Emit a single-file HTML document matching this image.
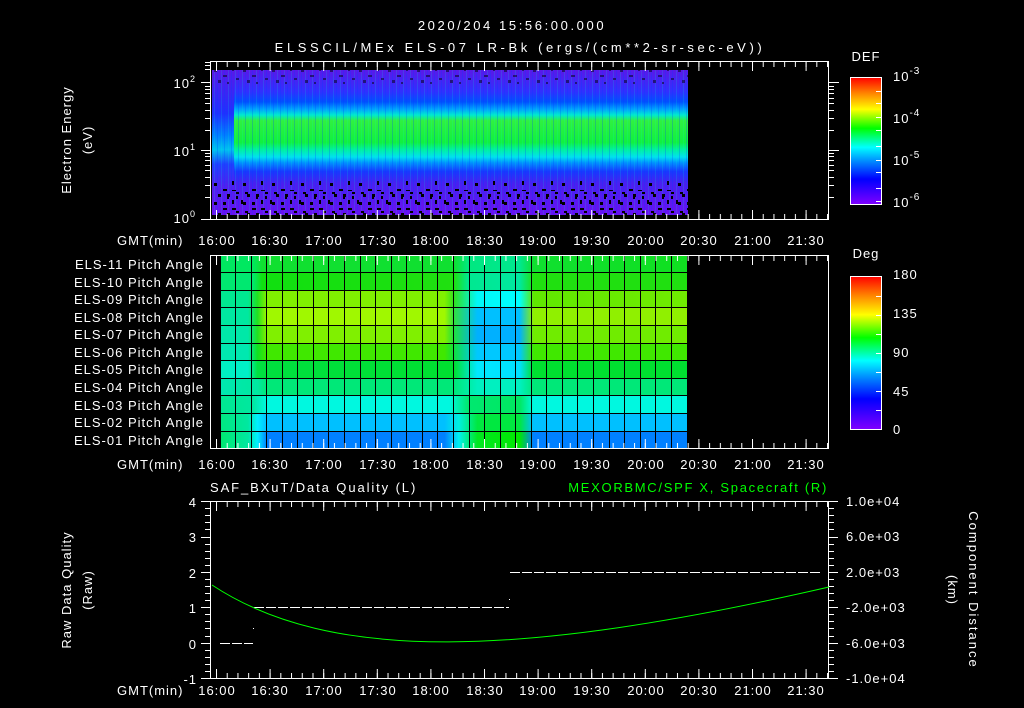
<!DOCTYPE html>
<html><head><meta charset="utf-8"><style>
html,body{margin:0;padding:0;background:#000;width:1024px;height:708px;overflow:hidden}
svg{display:block}
text{font-family:"Liberation Sans",sans-serif;fill:#fff;font-size:13px;letter-spacing:1px}
</style></head><body>
<svg width="1024" height="708" viewBox="0 0 1024 708" xmlns="http://www.w3.org/2000/svg">
<defs>
<linearGradient id="spec" x1="0" y1="0" x2="0" y2="1">
<stop offset="0" stop-color="#5a18e8"/><stop offset="0.15" stop-color="#3030ff"/><stop offset="0.22" stop-color="#0050ff"/>
<stop offset="0.27" stop-color="#00a0ff"/><stop offset="0.31" stop-color="#00e8d0"/><stop offset="0.35" stop-color="#30f040"/>
<stop offset="0.5" stop-color="#10f040"/><stop offset="0.55" stop-color="#00f0a0"/><stop offset="0.6" stop-color="#00e0f0"/>
<stop offset="0.64" stop-color="#0090ff"/><stop offset="0.7" stop-color="#1838ff"/><stop offset="0.78" stop-color="#4820f0"/>
<stop offset="1" stop-color="#6a10f0"/></linearGradient>
<linearGradient id="specL" x1="0" y1="0" x2="0" y2="1">
<stop offset="0" stop-color="#5a18e8"/><stop offset="0.3" stop-color="#2030ff"/><stop offset="0.45" stop-color="#0080ff"/>
<stop offset="0.55" stop-color="#00c0f0"/><stop offset="0.65" stop-color="#2040ff"/><stop offset="0.8" stop-color="#5020f0"/><stop offset="1" stop-color="#6a10f0"/></linearGradient>
<pattern id="speck" patternUnits="userSpaceOnUse" x="212" y="180" width="29" height="19">
<rect x="2" y="3" width="3" height="3" fill="#000"/><rect x="11" y="9" width="4" height="2" fill="#000"/>
<rect x="20" y="1" width="2" height="4" fill="#000"/><rect x="6" y="14" width="3" height="3" fill="#000"/>
<rect x="24" y="12" width="3" height="2" fill="#000"/><rect x="15" y="16" width="2" height="3" fill="#000"/></pattern>
<pattern id="streak" patternUnits="userSpaceOnUse" x="0" y="0" width="7" height="10">
<rect x="0" y="0" width="1" height="10" fill="#0040ff" opacity="0.25"/><rect x="4" y="0" width="1" height="10" fill="#00ffd0" opacity="0.15"/></pattern>
<pattern id="minT" patternUnits="userSpaceOnUse" x="216" y="0" width="10.72" height="708">
<rect x="0" y="0" width="1" height="708" fill="#fff"/></pattern>
<pattern id="majT" patternUnits="userSpaceOnUse" x="216" y="0" width="53.6" height="708">
<rect x="0" y="0" width="1" height="708" fill="#fff"/></pattern>
<linearGradient id="cb1" x1="0" y1="1" x2="0" y2="0">
<stop offset="0" stop-color="#8000ff"/><stop offset="0.2" stop-color="#0000ff"/><stop offset="0.33" stop-color="#0080ff"/>
<stop offset="0.45" stop-color="#00ffff"/><stop offset="0.6" stop-color="#00ff00"/><stop offset="0.75" stop-color="#ffff00"/>
<stop offset="0.88" stop-color="#ff8000"/><stop offset="1" stop-color="#ff0000"/></linearGradient>
</defs>

<text x="512" y="30" text-anchor="middle" font-size="16" style="letter-spacing:2.6px">2020/204 15:56:00.000</text>
<text x="520" y="52" text-anchor="middle" font-size="16" style="letter-spacing:3.6px">ELSSCIL/MEx ELS-07 LR-Bk  (ergs/(cm**2-sr-sec-eV))</text>

<!-- PANEL 1 -->
<rect x="212" y="70" width="476" height="145" fill="url(#spec)"/>
<rect x="212" y="70" width="22" height="145" fill="url(#specL)"/>
<rect x="212" y="70" width="476" height="145" fill="url(#streak)"/>
<rect x="212" y="70" width="476" height="14" fill="url(#speck)" opacity="0.5"/>
<rect x="212" y="180" width="476" height="35" fill="url(#speck)"/>
<rect x="212" y="190" width="476" height="25" fill="url(#speck)" transform="translate(9,0)"/>
<rect x="210.5" y="61.5" width="618" height="158" fill="none" stroke="#fff"/>
<rect x="211" y="62" width="617" height="5" fill="url(#minT)"/>
<rect x="211" y="62" width="617" height="9" fill="url(#majT)"/>
<rect x="211" y="214" width="617" height="5" fill="url(#minT)"/>
<rect x="211" y="210" width="617" height="9" fill="url(#majT)"/>
<g stroke="#fff">
<path d="M201 219.5h9M201 150.5h9M201 82.5h9"/>
<path d="M205 197.5h5M205 185.5h5M205 177.5h5M205 170.5h5M205 165.5h5M205 160.5h5M205 156.5h5M205 153.5h5M205 130.5h5M205 118.5h5M205 110.5h5M205 103.5h5M205 98.5h5M205 93.5h5M205 89.5h5M205 86.5h5M205 62.5h5M205 65.5h5M205 69.5h5"/>
<path d="M829 150.5h10M829 82.5h10M829 197.5h5M829 185.5h5M829 177.5h5M829 170.5h5M829 165.5h5M829 160.5h5M829 156.5h5M829 153.5h5M829 130.5h5M829 118.5h5M829 110.5h5M829 103.5h5M829 98.5h5M829 93.5h5M829 89.5h5M829 86.5h5"/>
</g>
<text x="196" y="88" text-anchor="end" font-size="14">10<tspan font-size="9" dy="-6">2</tspan></text>
<text x="196" y="156" text-anchor="end" font-size="14">10<tspan font-size="9" dy="-6">1</tspan></text>
<text x="196" y="223" text-anchor="end" font-size="14">10<tspan font-size="9" dy="-6">0</tspan></text>
<text transform="translate(71,140) rotate(-90)" text-anchor="middle" font-size="15">Electron Energy</text>
<text transform="translate(92,140) rotate(-90)" text-anchor="middle" font-size="15">(eV)</text>
<rect x="850.5" y="77.5" width="31" height="127" fill="url(#cb1)" stroke="#fff"/>
<g stroke="#fff"><path d="M876 91.5h6M876 103.5h6M876 117.5h6M876 130.5h6M876 146.5h6M876 160.5h6M876 172.5h6M876 188.5h6M876 201.5h6"/></g>
<text x="866" y="61" text-anchor="middle" font-size="16">DEF</text>
<text x="893" y="81" font-size="16">10<tspan font-size="10" dy="-7">-3</tspan></text>
<text x="893" y="123" font-size="16">10<tspan font-size="10" dy="-7">-4</tspan></text>
<text x="893" y="165" font-size="16">10<tspan font-size="10" dy="-7">-5</tspan></text>
<text x="893" y="207" font-size="16">10<tspan font-size="10" dy="-7">-6</tspan></text>

<g id="tl">
<text x="117" y="245">GMT(min)</text>
<g text-anchor="middle">
<text x="217" y="245">16:00</text><text x="270" y="245">16:30</text><text x="324" y="245">17:00</text>
<text x="378" y="245">17:30</text><text x="431" y="245">18:00</text><text x="485" y="245">18:30</text>
<text x="538" y="245">19:00</text><text x="592" y="245">19:30</text><text x="646" y="245">20:00</text>
<text x="699" y="245">20:30</text><text x="753" y="245">21:00</text><text x="806" y="245">21:30</text>
</g></g>
<use href="#tl" y="224"/>
<use href="#tl" y="450"/>

<!-- PANEL 2 -->
<linearGradient id="r1" x1="220" x2="688" gradientUnits="userSpaceOnUse"><stop offset="0" stop-color="#00e860"/><stop offset="0.07" stop-color="#00e860"/><stop offset="0.09" stop-color="#10e030"/><stop offset="0.5" stop-color="#10e030"/><stop offset="0.53" stop-color="#00e880"/><stop offset="0.64" stop-color="#00e890"/><stop offset="0.67" stop-color="#10e030"/><stop offset="1" stop-color="#10e020"/></linearGradient>
<linearGradient id="r2" x1="220" x2="688" gradientUnits="userSpaceOnUse"><stop offset="0" stop-color="#00e870"/><stop offset="0.07" stop-color="#00e870"/><stop offset="0.09" stop-color="#10e010"/><stop offset="0.5" stop-color="#20e010"/><stop offset="0.53" stop-color="#00e890"/><stop offset="0.64" stop-color="#00e8a0"/><stop offset="0.67" stop-color="#20e010"/><stop offset="1" stop-color="#20e010"/></linearGradient>
<linearGradient id="r3" x1="220" x2="688" gradientUnits="userSpaceOnUse"><stop offset="0" stop-color="#00e890"/><stop offset="0.06" stop-color="#00e890"/><stop offset="0.08" stop-color="#20e020"/><stop offset="0.1" stop-color="#80f000"/><stop offset="0.48" stop-color="#80f000"/><stop offset="0.5" stop-color="#30e020"/><stop offset="0.55" stop-color="#00f8f8"/><stop offset="0.64" stop-color="#00ffff"/><stop offset="0.67" stop-color="#60e800"/><stop offset="1" stop-color="#70ec00"/></linearGradient>
<linearGradient id="r4" x1="220" x2="688" gradientUnits="userSpaceOnUse"><stop offset="0" stop-color="#00e8a0"/><stop offset="0.06" stop-color="#00e8a0"/><stop offset="0.08" stop-color="#20e020"/><stop offset="0.1" stop-color="#a0f800"/><stop offset="0.48" stop-color="#a0f800"/><stop offset="0.5" stop-color="#30e040"/><stop offset="0.55" stop-color="#00c0ff"/><stop offset="0.64" stop-color="#00c0ff"/><stop offset="0.67" stop-color="#90f000"/><stop offset="1" stop-color="#90f000"/></linearGradient>
<linearGradient id="r5" x1="220" x2="688" gradientUnits="userSpaceOnUse"><stop offset="0" stop-color="#00e8a8"/><stop offset="0.06" stop-color="#00e8a8"/><stop offset="0.08" stop-color="#20e020"/><stop offset="0.1" stop-color="#80f000"/><stop offset="0.48" stop-color="#80f000"/><stop offset="0.5" stop-color="#20e040"/><stop offset="0.55" stop-color="#00b0ff"/><stop offset="0.64" stop-color="#00b0ff"/><stop offset="0.67" stop-color="#70ec00"/><stop offset="1" stop-color="#70ec00"/></linearGradient>
<linearGradient id="r6" x1="220" x2="688" gradientUnits="userSpaceOnUse"><stop offset="0" stop-color="#00e8b0"/><stop offset="0.06" stop-color="#00e8b0"/><stop offset="0.08" stop-color="#10e020"/><stop offset="0.1" stop-color="#40e800"/><stop offset="0.48" stop-color="#40e800"/><stop offset="0.5" stop-color="#10e040"/><stop offset="0.55" stop-color="#00c8ff"/><stop offset="0.64" stop-color="#00c8ff"/><stop offset="0.67" stop-color="#40e800"/><stop offset="1" stop-color="#40e800"/></linearGradient>
<linearGradient id="r7" x1="220" x2="688" gradientUnits="userSpaceOnUse"><stop offset="0" stop-color="#00f0c0"/><stop offset="0.06" stop-color="#00f0c8"/><stop offset="0.08" stop-color="#00e040"/><stop offset="0.5" stop-color="#00e030"/><stop offset="0.55" stop-color="#00e8ff"/><stop offset="0.64" stop-color="#00e0ff"/><stop offset="0.67" stop-color="#00e030"/><stop offset="1" stop-color="#00e030"/></linearGradient>
<linearGradient id="r8" x1="220" x2="688" gradientUnits="userSpaceOnUse"><stop offset="0" stop-color="#00e8b0"/><stop offset="0.08" stop-color="#00e8a0"/><stop offset="0.1" stop-color="#00e878"/><stop offset="0.5" stop-color="#00e878"/><stop offset="0.55" stop-color="#00f0c0"/><stop offset="0.64" stop-color="#00f0c0"/><stop offset="0.67" stop-color="#00e878"/><stop offset="1" stop-color="#00e878"/></linearGradient>
<linearGradient id="r9" x1="220" x2="688" gradientUnits="userSpaceOnUse"><stop offset="0" stop-color="#00e890"/><stop offset="0.07" stop-color="#00e8a0"/><stop offset="0.1" stop-color="#00f8e0"/><stop offset="0.49" stop-color="#00f8e0"/><stop offset="0.53" stop-color="#00e870"/><stop offset="0.64" stop-color="#00e860"/><stop offset="0.67" stop-color="#00f8e0"/><stop offset="1" stop-color="#00f8e0"/></linearGradient>
<linearGradient id="r10" x1="220" x2="688" gradientUnits="userSpaceOnUse"><stop offset="0" stop-color="#00e880"/><stop offset="0.06" stop-color="#00e8a0"/><stop offset="0.08" stop-color="#00f0ff"/><stop offset="0.1" stop-color="#00c0ff"/><stop offset="0.48" stop-color="#00c0ff"/><stop offset="0.51" stop-color="#00f0e0"/><stop offset="0.55" stop-color="#00e840"/><stop offset="0.64" stop-color="#00e840"/><stop offset="0.67" stop-color="#00c0ff"/><stop offset="1" stop-color="#00c0ff"/></linearGradient>
<linearGradient id="r11" x1="220" x2="688" gradientUnits="userSpaceOnUse"><stop offset="0" stop-color="#00e870"/><stop offset="0.06" stop-color="#00e8a0"/><stop offset="0.08" stop-color="#00f0ff"/><stop offset="0.1" stop-color="#0080ff"/><stop offset="0.48" stop-color="#0080ff"/><stop offset="0.51" stop-color="#00f0f0"/><stop offset="0.55" stop-color="#00e820"/><stop offset="0.64" stop-color="#00e800"/><stop offset="0.67" stop-color="#0080ff"/><stop offset="1" stop-color="#0080ff"/></linearGradient>
<rect x="220" y="255" width="468" height="18" fill="url(#r1)"/>
<rect x="220" y="273" width="468" height="18" fill="url(#r2)"/>
<rect x="220" y="290" width="468" height="18" fill="url(#r3)"/>
<rect x="220" y="308" width="468" height="18" fill="url(#r4)"/>
<rect x="220" y="326" width="468" height="18" fill="url(#r5)"/>
<rect x="220" y="343" width="468" height="18" fill="url(#r6)"/>
<rect x="220" y="361" width="468" height="18" fill="url(#r7)"/>
<rect x="220" y="378" width="468" height="18" fill="url(#r8)"/>
<rect x="220" y="396" width="468" height="18" fill="url(#r9)"/>
<rect x="220" y="414" width="468" height="18" fill="url(#r10)"/>
<rect x="220" y="431" width="468" height="18" fill="url(#r11)"/>
<g stroke="#000" stroke-width="1">
<path d="M220.5 255v194M235.5 255v194M251.5 255v194M266.5 255v194M282.5 255v194M297.5 255v194M313.5 255v194M328.5 255v194M344.5 255v194M360.5 255v194M375.5 255v194M391.5 255v194M406.5 255v194M422.5 255v194M437.5 255v194M453.5 255v194M469.5 255v194M484.5 255v194M500.5 255v194M515.5 255v194M531.5 255v194M546.5 255v194M562.5 255v194M577.5 255v194M593.5 255v194M609.5 255v194M624.5 255v194M640.5 255v194M655.5 255v194M671.5 255v194M687.5 255v194"/>
<path d="M220 272.5h468M220 290.5h468M220 307.5h468M220 325.5h468M220 343.5h468M220 360.5h468M220 378.5h468M220 395.5h468M220 413.5h468M220 431.5h468"/>
</g>
<rect x="210.5" y="255.5" width="618" height="193" fill="none" stroke="#fff"/>
<rect x="211" y="256" width="617" height="5" fill="url(#minT)"/>
<rect x="211" y="256" width="617" height="9" fill="url(#majT)"/>
<rect x="211" y="443" width="617" height="5" fill="url(#minT)"/>
<rect x="211" y="439" width="617" height="9" fill="url(#majT)"/>
<g text-anchor="end">
<text x="204" y="269">ELS-11 Pitch Angle</text><text x="204" y="287">ELS-10 Pitch Angle</text>
<text x="204" y="304">ELS-09 Pitch Angle</text><text x="204" y="322">ELS-08 Pitch Angle</text>
<text x="204" y="339">ELS-07 Pitch Angle</text><text x="204" y="357">ELS-06 Pitch Angle</text>
<text x="204" y="374">ELS-05 Pitch Angle</text><text x="204" y="392">ELS-04 Pitch Angle</text>
<text x="204" y="410">ELS-03 Pitch Angle</text><text x="204" y="427">ELS-02 Pitch Angle</text>
<text x="204" y="445">ELS-01 Pitch Angle</text></g>
<rect x="850.5" y="276.5" width="31" height="153" fill="url(#cb1)" stroke="#fff"/>
<g stroke="#fff"><path d="M876 296.5h6M876 315.5h6M876 334.5h6M876 353.5h6M876 372.5h6M876 391.5h6M876 410.5h6"/></g>
<text x="866" y="258" text-anchor="middle" font-size="16">Deg</text>
<g font-size="16"><text x="893" y="279">180</text><text x="893" y="318">135</text><text x="893" y="357">90</text><text x="893" y="396">45</text><text x="893" y="434">0</text></g>

<!-- PANEL 3 -->
<text x="210" y="492" font-size="16" style="letter-spacing:1.9px">SAF_BXuT/Data Quality (L)</text>
<text x="828" y="492" text-anchor="end" font-size="16" style="fill:#00ff00;letter-spacing:1.7px">MEXORBMC/SPF X, Spacecraft (R)</text>
<rect x="210.5" y="501.5" width="618" height="177" fill="none" stroke="#fff"/>
<rect x="211" y="502" width="617" height="5" fill="url(#minT)"/>
<rect x="211" y="502" width="617" height="9" fill="url(#majT)"/>
<rect x="211" y="673" width="617" height="5" fill="url(#minT)"/>
<rect x="211" y="669" width="617" height="9" fill="url(#majT)"/>
<g stroke="#fff">
<path d="M201 501.5h9M201 537.5h9M201 572.5h9M201 607.5h9M201 643.5h9M201 678.5h9"/>
<path d="M205 508.5h5M205 515.5h5M205 522.5h5M205 529.5h5M205 544.5h5M205 551.5h5M205 558.5h5M205 565.5h5M205 579.5h5M205 586.5h5M205 593.5h5M205 600.5h5M205 614.5h5M205 621.5h5M205 628.5h5M205 636.5h5M205 650.5h5M205 657.5h5M205 664.5h5M205 671.5h5"/>
<path d="M829 501.5h9M829 537.5h9M829 572.5h9M829 607.5h9M829 643.5h9M829 678.5h9"/>
<path d="M829 508.5h5M829 515.5h5M829 522.5h5M829 529.5h5M829 544.5h5M829 551.5h5M829 558.5h5M829 565.5h5M829 579.5h5M829 586.5h5M829 593.5h5M829 600.5h5M829 614.5h5M829 621.5h5M829 628.5h5M829 636.5h5M829 650.5h5M829 657.5h5M829 664.5h5M829 671.5h5"/>
</g>
<g text-anchor="end" font-size="16">
<text x="197" y="507">4</text><text x="197" y="542">3</text><text x="197" y="578">2</text>
<text x="197" y="613">1</text><text x="197" y="649">0</text><text x="197" y="684">-1</text></g>
<g font-size="14">
<text x="846" y="506">1.0e+04</text><text x="846" y="541">6.0e+03</text><text x="846" y="577">2.0e+03</text>
<text x="846" y="612">-2.0e+03</text><text x="846" y="648">-6.0e+03</text><text x="846" y="683">-1.0e+04</text></g>
<text transform="translate(71,590) rotate(-90)" text-anchor="middle" font-size="15">Raw Data Quality</text>
<text transform="translate(92,590) rotate(-90)" text-anchor="middle" font-size="15">(Raw)</text>
<text transform="translate(969,590) rotate(90)" text-anchor="middle" font-size="16" style="letter-spacing:2px">Component Distance</text>
<text transform="translate(948,590) rotate(90)" text-anchor="middle" font-size="16">(km)</text>
<g stroke="#fff" stroke-dasharray="10,2">
<path d="M220 643.5h33M254 607.5h255M510 572.5h310"/></g>
<rect x="253" y="628" width="1" height="1" fill="#fff"/><rect x="509" y="599" width="1" height="1" fill="#fff"/>
<path d="M212 585 C 330 663 520 658 829 587" fill="none" stroke="#00ff00" stroke-width="1"/>
</svg>
</body></html>
